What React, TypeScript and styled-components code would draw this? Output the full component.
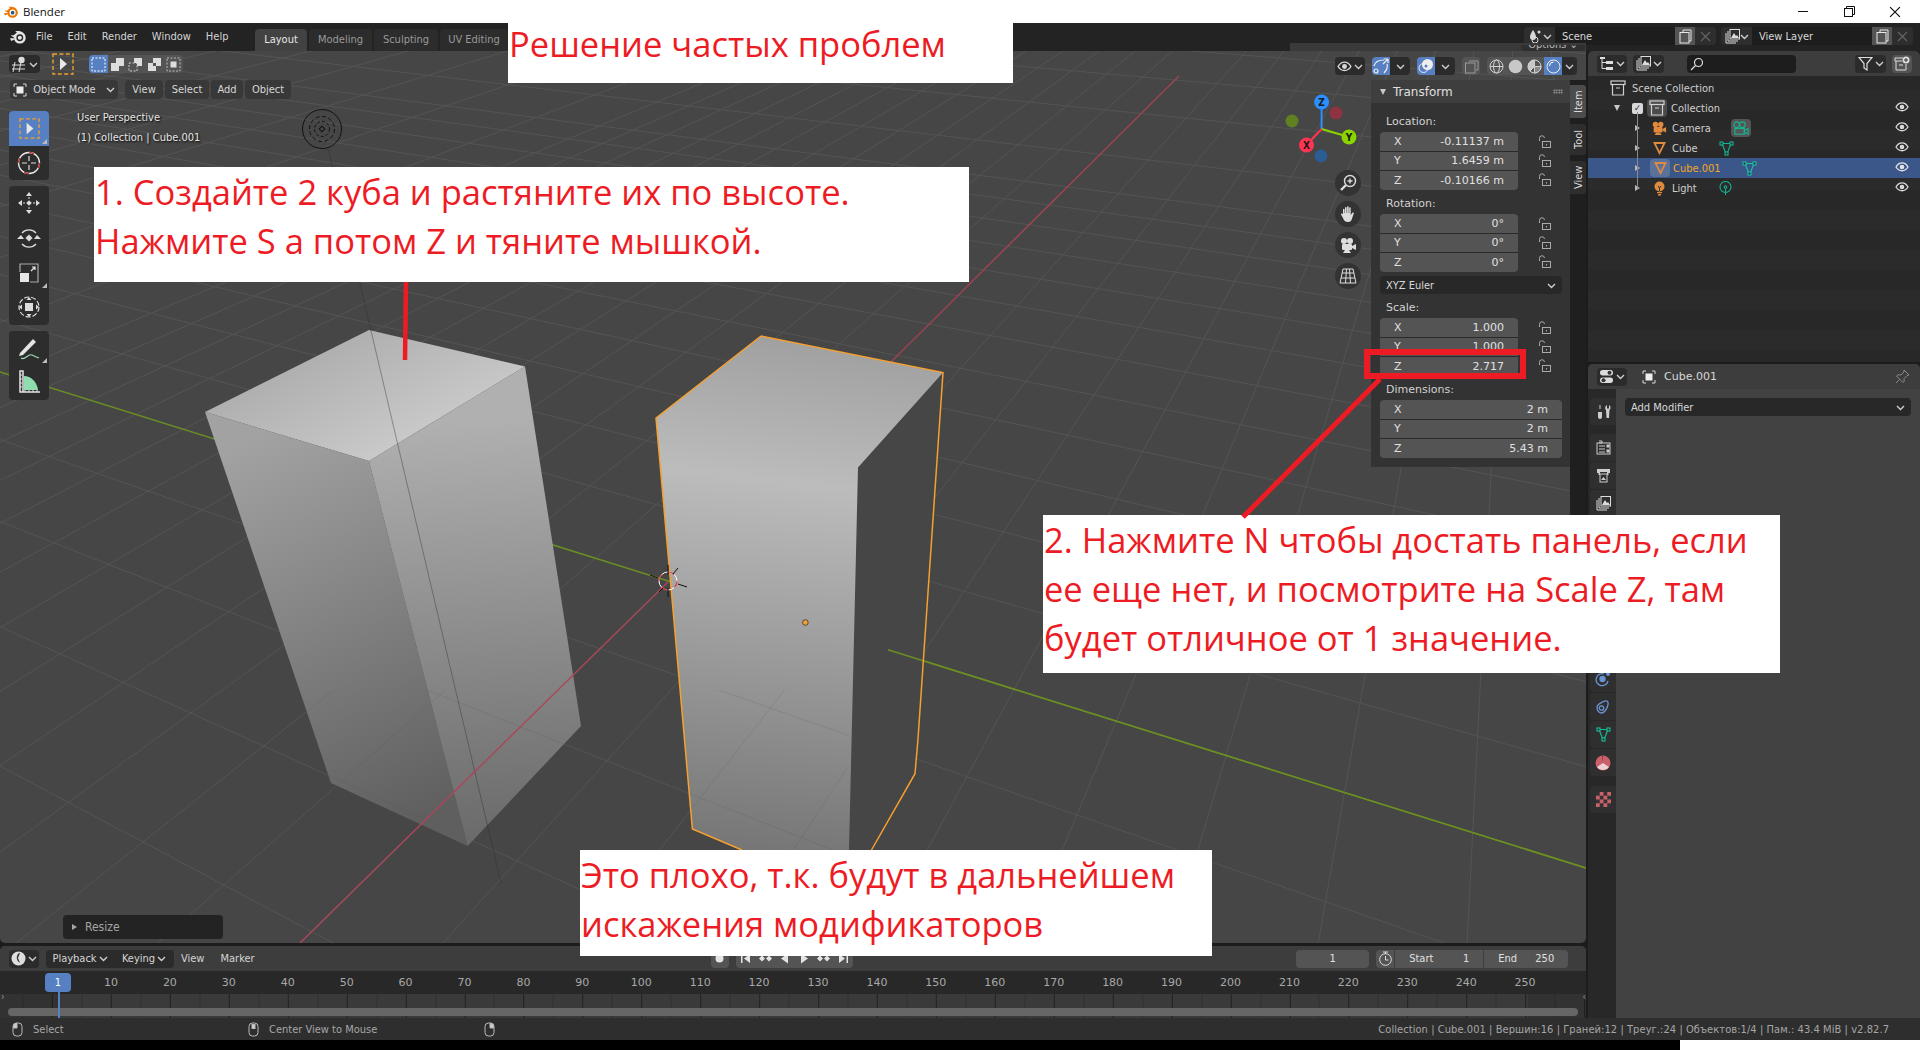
import styled, { createGlobalStyle } from "styled-components";

const Global = createGlobalStyle`
  html, body { margin: 0; padding: 0; background: #000; }
  * { box-sizing: border-box; }
`;

const Page = styled.div`
  position: relative;
  width: 1920px;
  height: 1050px;
  overflow: hidden;
  background: #1c1c1c;
  color: #d9d9d9;
  font-family: "DejaVu Sans", sans-serif;
  font-stretch: condensed;
  font-size: 11px;
  line-height: 1;
`;

const Svg = styled.svg<{ $s?: number }>`
  display: block;
  flex: none;
  width: ${p => p.$s || 16}px;
  height: ${p => p.$s || 16}px;
`;

/* ---------- title + top bar ---------- */
const TitleBar = styled.div`
  height: 23px;
  background: #fff;
  display: flex;
  align-items: center;
  padding: 0 2px 0 3px;
  color: #111;
  font: 11.5px "Open Sans", sans-serif;
`;
const TitleText = styled.span`
  margin-left: 4px;
  flex: 1;
`;
const WinBtn = styled.div`
  width: 46px;
  display: flex;
  justify-content: center;
`;
const TopBar = styled.div`
  height: 28px;
  background: #232323;
  display: flex;
  align-items: flex-start;
  padding-left: 9px;
`;
const Menu = styled.div`
  display: flex;
  gap: 15px;
  margin: 8px 0 0 9px;
  width: 219px;
  color: #d4d4d4;
`;
const Tab = styled.div<{ $active?: boolean; $w: number }>`
  width: ${p => p.$w}px;
  height: 22px;
  margin: 6px 2px 0 0;
  padding-bottom: 2px;
  border-radius: 4px 4px 0 0;
  display: flex;
  align-items: center;
  justify-content: center;
  background: ${p => (p.$active ? "#424242" : "#2c2c2c")};
  color: ${p => (p.$active ? "#e8e8e8" : "#999")};
`;
const TopRight = styled.div`
  margin-left: auto;
  display: flex;
  gap: 5px;
  padding: 4px 7px 0 0;
`;
const SceneGroup = styled.div`
  display: flex;
  height: 18px;
`;
const SceneIcon = styled.div`
  width: 31px;
  border-radius: 4px 0 0 4px;
  background: #2e2e2e;
  display: flex;
  align-items: center;
  justify-content: center;
`;
const SceneName = styled.div`
  width: 120px;
  background: #1d1d1d;
  display: flex;
  align-items: center;
  padding-left: 7px;
  color: #d8d8d8;
`;
const SceneBtn = styled.div<{ $dim?: boolean }>`
  width: ${p => (p.$dim ? 21 : 20)}px;
  display: flex;
  align-items: center;
  justify-content: center;
  background: ${p => (p.$dim ? "#2e2e2e" : "#545454")};
  border-radius: ${p => (p.$dim ? "0 4px 4px 0" : "0")};
`;

/* ---------- main layout ---------- */
const Workspace = styled.div`
  height: 967px;
  display: flex;
`;
const LeftCol = styled.div`
  width: 1586px;
  display: flex;
  flex-direction: column;
  gap: 3px;
`;
const RightCol = styled.div`
  width: 332px;
  margin-left: 2px;
  display: flex;
  flex-direction: column;
  gap: 2px;
`;

/* ---------- viewport ---------- */
const Viewport = styled.div`
  position: relative;
  height: 892px;
  background: #464646;
  border-radius: 0 0 5px 5px;
`;
const Canvas = styled.svg`
  position: absolute;
  inset: 0;
  width: 1586px;
  height: 892px;
`;
const HeaderStrip = styled.div`
  position: absolute;
  left: 1290px;
  top: -8px;
  width: 296px;
  height: 8px;
  background: #3a3a3a;
`;
const OptionsPill = styled.div`
  position: absolute;
  left: 1521px;
  top: -6px;
  width: 64px;
  height: 6px;
  overflow: hidden;
  background: #2f2f2f;
  border-radius: 0 0 4px 4px;
  color: #bbb;
  text-align: center;
  line-height: 0;
`;
const HeaderLayer = styled.div`
  position: relative;
  padding: 4px 9px 0;
`;
const HeadRow = styled.div`
  display: flex;
  align-items: flex-start;
`;
const ModeRow = styled.div`
  display: flex;
  margin-top: 5px;
  margin-left: 1px;
  gap: 2px;
`;
const Btn = styled.div<{ $w: number; $kind?: "dark" | "mid" | "blue"; $ml?: number }>`
  width: ${p => p.$w}px;
  height: 18px;
  margin-left: ${p => p.$ml || 0}px;
  flex: none;
  display: flex;
  align-items: center;
  justify-content: center;
  gap: 2px;
  white-space: nowrap;
  border-radius: 4px;
  color: #d6d6d6;
  background: ${p => (p.$kind === "blue" ? "#5680c2" : p.$kind === "mid" ? "#545454" : "#2b2b2b")};
`;
const Joined = styled.div<{ $ml?: number }>`
  display: flex;
  margin-left: ${p => p.$ml || 0}px;
  & > * { border-radius: 0; margin-left: 0; }
  & > *:first-child { border-radius: 4px 0 0 4px; }
  & > *:last-child { border-radius: 0 4px 4px 0; }
`;
const ViewTools = styled.div`
  margin-left: auto;
  margin-top: 2px;
  display: flex;
  gap: 7px;
`;
const ModeBtn = styled(Btn)`
  height: 19px;
  background: #383838;
`;
const ModeLabel = styled.span`
  margin: 0 8px 0 4px;
`;
const ToolColumn = styled.div`
  position: absolute;
  left: 9px;
  top: 60px;
  display: flex;
  flex-direction: column;
  gap: 6px;
`;
const ToolGroup = styled.div`
  width: 40px;
  border-radius: 4px;
  overflow: hidden;
  background: #2d2d2d;
`;
const Tool = styled.div<{ $active?: boolean; $corner?: boolean }>`
  position: relative;
  height: 34.6px;
  display: flex;
  align-items: center;
  justify-content: center;
  background: ${p => (p.$active ? "#5680c2" : "transparent")};
  &::after {
    content: "";
    display: ${p => (p.$corner ? "block" : "none")};
    position: absolute;
    right: 2px;
    bottom: 2px;
    border-left: 5px solid transparent;
    border-bottom: 5px solid #bbb;
  }
`;
const ViewInfo = styled.div`
  position: absolute;
  left: 77px;
  top: 57px;
  color: #e6e6e6;
  text-shadow: 1px 1px 2px #000;
  line-height: 20px;
`;
const ResizePanel = styled.div`
  position: absolute;
  left: 63px;
  bottom: 4px;
  width: 160px;
  height: 24px;
  border-radius: 4px;
  background: #232323;
  color: #a5a5a5;
  font-size: 12px;
  display: flex;
  align-items: center;
  padding-left: 9px;
  gap: 8px;
`;
const Tri = styled.span`
  border-left: 5px solid #a5a5a5;
  border-top: 3.5px solid transparent;
  border-bottom: 3.5px solid transparent;
`;
const NavButtons = styled.div`
  position: absolute;
  left: 1335px;
  top: 119px;
  display: flex;
  flex-direction: column;
  gap: 5px;
`;
const NavBtn = styled.div`
  width: 26px;
  height: 26px;
  border-radius: 50%;
  background: #333;
  display: flex;
  align-items: center;
  justify-content: center;
`;

/* ---------- N panel ---------- */
const NPanel = styled.div`
  position: absolute;
  left: 1371px;
  top: 29px;
  width: 199px;
  height: 387px;
  background: #333;
  font-stretch: normal;
`;
const NHead = styled.div`
  height: 23px;
  background: #3e3e3e;
  display: flex;
  align-items: center;
  padding: 0 7px 0 9px;
  gap: 7px;
  color: #e0e0e0;
  font-size: 12px;
`;
const DownTri = styled.span`
  border-top: 6px solid #c8c8c8;
  border-left: 3.5px solid transparent;
  border-right: 3.5px solid transparent;
`;
const Grip = styled.span`
  margin-left: auto;
  width: 10px;
  height: 5px;
  background-image: radial-gradient(#999 0.8px, transparent 0.9px);
  background-size: 2.5px 2.5px;
`;
const NBody = styled.div`
  padding: 9px 8px 0 9px;
`;
const FieldLabel = styled.div`
  height: 18px;
  margin-bottom: 2px;
  padding-left: 6px;
  display: flex;
  align-items: center;
  color: #d2d2d2;
`;
const Section = styled.div`
  margin-bottom: 4px;
`;
const FieldLine = styled.div`
  display: flex;
`;
const Stack = styled.div<{ $w: number }>`
  width: ${p => p.$w}px;
  height: 58px;
  flex: none;
  display: grid;
  grid-template-rows: repeat(3, 1fr);
  gap: 1px;
  background: #2a2a2a;
  border-radius: 4px;
  overflow: hidden;
`;
const Field = styled.div`
  background: #545454;
  display: flex;
  align-items: center;
  justify-content: space-between;
  padding: 0 14px;
  color: #e0e0e0;
`;
const LockCol = styled.div`
  width: 54px;
  height: 58px;
  flex: none;
  display: grid;
  grid-template-rows: repeat(3, 1fr);
  justify-items: center;
  align-items: center;
`;
const Dropdown = styled.div`
  height: 18px;
  margin-bottom: 4px;
  padding: 0 6px;
  border-radius: 4px;
  background: #282828;
  display: flex;
  align-items: center;
  justify-content: space-between;
  color: #d8d8d8;
  font-stretch: condensed;
`;
const SideTabs = styled.div`
  position: absolute;
  left: 1570px;
  top: 29px;
  width: 16px;
  height: 435px;
  background: #1f1f1f;
  padding-top: 5px;
  display: flex;
  flex-direction: column;
  gap: 6px;
`;
const SideTab = styled.div<{ $active?: boolean; $h: number }>`
  height: ${p => p.$h}px;
  border-radius: 3px 0 0 3px;
  background: ${p => (p.$active ? "#4c4c4c" : "#2e2e2e")};
  color: #dcdcdc;
  writing-mode: vertical-rl;
  transform: rotate(180deg);
  display: flex;
  align-items: center;
  justify-content: center;
`;

/* ---------- timeline ---------- */
const Timeline = styled.div`
  position: relative;
  height: 72px;
  border-radius: 5px 5px 0 0;
  overflow: hidden;
  background: #3a3a3a;
`;
const TimeHead = styled.div`
  height: 25px;
  background: #3d3d3d;
  display: flex;
  align-items: center;
  padding-left: 9px;
`;
const PlainMenu = styled.span<{ $ml: number }>`
  margin-left: ${p => p.$ml}px;
  color: #d4d4d4;
`;
const Spacer = styled.div<{ $w: number }>`
  width: ${p => p.$w}px;
  flex: none;
`;
const Ruler = styled.div`
  height: 23px;
  background: #282828;
  display: flex;
  align-items: center;
  padding-left: 81.5px;
  color: #a8a8a8;
  font-stretch: normal;
`;
const RulerNum = styled.div`
  width: 58.93px;
  flex: none;
  text-align: center;
`;
const FrameChip = styled.div`
  position: absolute;
  left: 45px;
  top: 27px;
  width: 26px;
  height: 19px;
  border-radius: 4px;
  background: #5680c2;
  color: #fff;
  display: flex;
  align-items: center;
  justify-content: center;
`;
const Tracks = styled.div`
  height: 24px;
  background:
    linear-gradient(to right, rgba(0,0,0,.14) 59px, transparent 59px, transparent 1528px, rgba(0,0,0,.14) 1528px),
    repeating-linear-gradient(to right, #262626 0, #262626 1px, transparent 1px, transparent 58.93px) 52px 0,
    repeating-linear-gradient(to right, #303030 0, #303030 1px, transparent 1px, transparent 29.465px) 22.5px 0,
    #3a3a3a;
`;
const PlayHead = styled.div`
  position: absolute;
  left: 58px;
  top: 46px;
  width: 2px;
  height: 26px;
  background: #5680c2;
`;
const Scrollbar = styled.div`
  position: absolute;
  left: 8px;
  top: 62px;
  width: 1570px;
  height: 8px;
  border-radius: 4px;
  background: #666;
`;
const EdgeArrow = styled.span<{ $right?: boolean }>`
  position: absolute;
  top: 46px;
  ${p => (p.$right ? "right: 0;" : "left: 1px;")}
  color: #999;
  font-size: 10px;
`;
const TimeField = styled.div<{ $w: number; $between?: boolean }>`
  width: ${p => p.$w}px;
  height: 18px;
  background: #545454;
  display: flex;
  align-items: center;
  justify-content: ${p => (p.$between ? "space-between" : "center")};
  padding: 0 ${p => (p.$between ? 14 : 0)}px;
  color: #e0e0e0;
  border-radius: 4px;
  flex: none;
`;
const Seg = styled.div`
  display: flex;
  gap: 1px;
  & > * { border-radius: 0; }
  & > *:first-child { border-radius: 4px 0 0 4px; }
  & > *:last-child { border-radius: 0 4px 4px 0; }
`;

/* ---------- status bar ---------- */
const StatusBar = styled.div`
  height: 22px;
  background: #2e2e2e;
  display: flex;
  align-items: center;
  padding: 0 31px 0 10px;
  color: #a6a6a6;
`;
const StatusItem = styled.div<{ $w: number }>`
  width: ${p => p.$w}px;
  flex: none;
  display: flex;
  align-items: center;
  gap: 8px;
`;
const StatusRight = styled.div`
  margin-left: auto;
  letter-spacing: 0.07px;
`;
const BottomStrip = styled.div`
  height: 10px;
  display: flex;
  background: #000;
`;
const WhiteCorner = styled.div`
  margin-left: auto;
  width: 240px;
  background: #fff;
`;

/* ---------- outliner ---------- */
const Outliner = styled.div`
  position: relative;
  height: 311px;
  background: repeating-linear-gradient(to bottom, #282828 0, #282828 20px, #2b2b2b 20px, #2b2b2b 40px) 0 19px;
  border-radius: 5px 5px 0 0;
  overflow: hidden;
`;
const PanelHead = styled.div`
  height: 25px;
  background: #3d3d3d;
  display: flex;
  align-items: center;
  padding: 0 7px 0 9px;
`;
const SearchBox = styled.div`
  width: 109px;
  height: 18px;
  margin-left: 23px;
  border-radius: 4px;
  background: #1d1d1d;
  display: flex;
  align-items: center;
  padding-left: 3px;
`;
const Rows = styled.div`
  padding-top: 2px;
`;
const Row = styled.div<{ $pad: number; $selected?: boolean }>`
  position: relative;
  height: 20px;
  display: flex;
  align-items: center;
  padding-left: ${p => p.$pad}px;
  background: ${p => (p.$selected ? "#3b5689" : "transparent")};
  color: ${p => (p.$selected ? "#f5a623" : "#cfcfcf")};
`;
const RowText = styled.span<{ $ml: number }>`
  margin-left: ${p => p.$ml}px;
`;
const SideIcon = styled.div<{ $box?: boolean }>`
  margin-left: ${p => (p.$box ? 20 : 22)}px;
  width: ${p => (p.$box ? 20 : 14)}px;
  height: 18px;
  border-radius: 4px;
  background: ${p => (p.$box ? "#555" : "transparent")};
  display: flex;
  align-items: center;
  justify-content: center;
`;
const IconBox = styled.div<{ $box?: boolean }>`
  width: 20px;
  height: 18px;
  border-radius: 4px;
  background: ${p => (p.$box ? "rgba(255,255,255,.16)" : "transparent")};
  display: flex;
  align-items: center;
  justify-content: center;
`;
const EyeWrap = styled.div`
  position: absolute;
  left: 307px;
  top: 2px;
`;
const TreeArrow = styled.span`
  width: 0;
  height: 0;
  border-left: 5px solid #b8b8b8;
  border-top: 3px solid transparent;
  border-bottom: 3px solid transparent;
`;
const Check = styled.div`
  width: 11px;
  height: 11px;
  border-radius: 2px;
  background: #d8d8d8;
  color: #222;
  font-size: 9px;
  display: flex;
  align-items: center;
  justify-content: center;
  margin: 0 4px 0 12px;
`;
const TreeLine = styled.div`
  position: absolute;
  left: 49px;
  top: 61px;
  width: 1px;
  height: 77px;
  background: #8a8a8a;
`;

/* ---------- properties ---------- */
const Properties = styled.div`
  height: 654px;
  border-radius: 5px 5px 0 0;
  overflow: hidden;
  background: #424242;
  display: flex;
  flex-direction: column;
`;
const PropBody = styled.div`
  flex: 1;
  display: flex;
`;
const PropNav = styled.div`
  width: 28px;
  background: #282828;
  padding: 9px 0 0 2px;
  display: flex;
  flex-direction: column;
`;
const NavTab = styled.div<{ $mt?: number }>`
  height: 27px;
  margin-top: ${p => p.$mt ?? 1}px;
  border-radius: 4px 0 0 4px;
  background: #2f2f2f;
  flex: none;
  display: flex;
  align-items: center;
  justify-content: center;
`;
const PropMain = styled.div`
  flex: 1;
  padding: 9px 9px 0;
`;
const HeadTitle = styled.span`
  margin-left: 8px;
  color: #d8d8d8;
  font-stretch: normal;
`;
const PinWrap = styled.div`
  margin-left: auto;
  margin-right: 3px;
`;
const LogoOffset = styled.div`
  margin-top: 5px;
`;
const ToolOffset = styled.div`
  margin: -2px 0 0 12px;
`;

/* ---------- annotations ---------- */
const Note = styled.div<{ $x: number; $y: number; $w: number; $h: number; $lh?: number }>`
  position: absolute;
  left: ${p => p.$x}px;
  top: ${p => p.$y}px;
  width: ${p => p.$w}px;
  height: ${p => p.$h}px;
  background: #fff;
  color: #ed1c24;
  font-family: "Open Sans", sans-serif;
  font-stretch: normal;
  font-size: 34.5px;
  line-height: ${p => p.$lh || 49}px;
  padding-left: 1px;
  white-space: pre;
`;
const RedBox = styled.div`
  position: absolute;
  left: 1364px;
  top: 349px;
  width: 162px;
  height: 30px;
  border: 6px solid #ed1c24;
`;
const RedLines = styled.svg`
  position: absolute;
  inset: 0;
  width: 1920px;
  height: 1050px;
  pointer-events: none;
`;

/* ---------- icons ---------- */
const Chev = ({ c = "#cfcfcf" }: { c?: string }) => (
  <Svg $s={9} viewBox="0 0 9 9"><path d="M1 3l3.5 3.5L8 3" fill="none" stroke={c} strokeWidth="1.4" /></Svg>
);
const LOGO_PATH = "M1 9.5l5.5-.2L1.800 6h3.400l3.600-3-2-1.600h3.400c3.800 0 8.300 2.600 8.300 7.600 0 3.600-3 6.300-6.600 6.300-3.400 0-5.700-2-6-4.400L2.600 12.500z";
const Logo = ({ s = 16, ring = "#ea7600", hole = "#fff", core = "#265787" }: { s?: number; ring?: string; hole?: string; core?: string }) => (
  <Svg $s={s} viewBox="0 0 20 16">
    <path d={LOGO_PATH} fill={ring} />
    <circle cx="12" cy="8.800" r="3.800" fill={hole} />
    <circle cx="12" cy="8.800" r="2.300" fill={core} />
  </Svg>
);
const SelectIcon = ({ s = 22 }: { s?: number }) => (
  <Svg $s={s} viewBox="0 0 22 22">
    <rect x="1" y="1" width="20" height="20" fill="none" stroke="#f0a030" strokeWidth="1.400" strokeDasharray="4 2.400" />
    <path d="M8 5v12l7-6z" fill="#e8e8e8" />
  </Svg>
);
const CursorIcon = () => (
  <Svg $s={24} viewBox="0 0 24 24" fill="none">
    <circle cx="12" cy="12" r="10.500" stroke="#e8e8e8" strokeWidth="1.300" />
    <circle cx="12" cy="12" r="10.500" stroke="#b33" strokeWidth="1.400" strokeDasharray="5 11.500" />
    <path d="M12 5v5M12 14v5M5 12h5M14 12h5" stroke="#ddd" strokeWidth="1.200" />
  </Svg>
);
const MoveIcon = () => (
  <Svg $s={24} viewBox="0 0 24 24" fill="#ddd">
    <path d="M12 1l3 4H9zM12 23l-3-4h6zM1 12l4-3v6zM23 12l-4 3V9z" />
    <rect x="10" y="10" width="4" height="4" transform="rotate(45 12 12)" />
    <path d="M12 6v2M12 16v2M6 12h2M16 12h2" stroke="#ddd" />
  </Svg>
);
const RotateIcon = () => (
  <Svg $s={24} viewBox="0 0 24 24" fill="#ddd">
    <path d="M5 7a9.500 9.500 0 0 1 14 0M19 18a9.500 9.500 0 0 1-14 0" fill="none" stroke="#ddd" strokeWidth="1.300" />
    <path d="M0 13l4-4 3 4zM24 13l-4-4-3 4z" />
    <rect x="9.500" y="9.500" width="5" height="5" transform="rotate(45 12 12)" />
  </Svg>
);
const ScaleIcon = () => (
  <Svg $s={20} viewBox="0 0 20 20" fill="none">
    <path d="M1 9V1h18v18h-8" stroke="#aaa" strokeWidth="1.200" />
    <rect x="1" y="10" width="9" height="9" fill="#e6e6e6" />
    <path d="M12 8l4-4M13 4h3v3" stroke="#e6e6e6" strokeWidth="1.200" />
  </Svg>
);
const TransformIcon = () => (
  <Svg $s={24} viewBox="0 0 24 24" fill="#ddd">
    <circle cx="12" cy="12" r="10" fill="none" stroke="#ddd" strokeWidth="1.200" strokeDasharray="5 2" />
    <rect x="8" y="8" width="8" height="8" />
    <path d="M12 2l2.500 3h-5zM12 22l-2.500-3h5zM2 12l3-2.500v5zM22 12l-3 2.500v-5z" />
  </Svg>
);
const AnnotateIcon = () => (
  <Svg $s={28} viewBox="0 0 28 28" fill="none">
    <path d="M5 19L18 5l3 3L8 21l-4 1z" fill="#e4e4e4" />
    <path d="M6 24c4 3 7-5 11-3 2 1 4 2 7 3" stroke="#9fdcb5" strokeWidth="1.200" />
  </Svg>
);
const MeasureIcon = () => (
  <Svg $s={24} viewBox="0 0 24 24" fill="none">
    <path d="M7 6c7 0 13 6 14 14H7z" fill="#8fdcae" />
    <path d="M3 1h3v21H3zM3 22h20" stroke="#e4e4e4" strokeWidth="1.500" />
    <path d="M3 5h2M3 9h2M3 13h2M3 17h2M8 20v2M12 20v2M16 20v2M20 20v2" stroke="#e4e4e4" />
  </Svg>
);
const Eye = ({ c = "#d8d8d8", s = 14 }: { c?: string; s?: number }) => (
  <Svg $s={s} viewBox="0 0 14 14" fill="none">
    <path d="M1 7c3-5.500 9-5.500 12 0-3 5-9 5-12 0z" stroke={c} strokeWidth="1.300" />
    <circle cx="7" cy="7" r="2.300" fill={c} />
  </Svg>
);
const Lock = () => (
  <Svg $s={14} viewBox="0 0 14 14" fill="none" stroke="#aaa">
    <path d="M1.500 6V3.500a2.500 2.500 0 0 1 5-.5" />
    <rect x="4.500" y="6.500" width="8" height="6" />
    <path d="M8.500 9v1.500" />
  </Svg>
);
const CopyIcon = () => (
  <Svg $s={15} viewBox="0 0 15 15" fill="none" stroke="#e8e8e8">
    <path d="M5 3V1h8v11h-2" />
    <rect x="2" y="3.500" width="9" height="10.500" />
  </Svg>
);
const XIcon = ({ c = "#666", s = 11 }: { c?: string; s?: number }) => (
  <Svg $s={s} viewBox="0 0 11 11"><path d="M1 1l9 9M10 1l-9 9" stroke={c} strokeWidth="1.100" /></Svg>
);
const LayerIcon = () => (
  <Svg $s={15} viewBox="0 0 15 15" fill="none" stroke="#ddd">
    <path d="M1 4v10h10M3 2v10h10" />
    <rect x="5" y="0.500" width="9.500" height="9.500" />
    <path d="M6 9l3-5 2 3 1-1 2 3z" fill="#ddd" stroke="none" />
  </Svg>
);
const SceneIc = () => (
  <Svg $s={15} viewBox="0 0 15 15" fill="#d8d8d8">
    <path d="M5 1c2 3 3 5 3 7a3 3 0 0 1-6 0c0-2 1-4 3-7z" />
    <circle cx="11" cy="3" r="1.500" />
    <circle cx="7" cy="11" r="3" fill="none" stroke="#d8d8d8" />
  </Svg>
);
const ModeIcon = ({ s = 14 }: { s?: number }) => (
  <Svg $s={s} viewBox="0 0 14 14" fill="none">
    <path d="M1 4V1h3M10 1h3v3M1 10v3h3M13 10v3h-3" stroke="#d8d8d8" />
    <rect x="3.500" y="3.500" width="7" height="7" fill="#eee" />
  </Svg>
);
const ViewportEd = () => (
  <Svg $s={16} viewBox="0 0 16 16" fill="none" stroke="#ddd">
    <path d="M1 9h13M1 13h13M4 6l-2 10M10 6l-2 10" />
    <circle cx="10.500" cy="4" r="3.200" fill="#ddd" stroke="none" />
  </Svg>
);
const SelMode = ({ i }: { i: number }) => (
  <Svg $s={15} viewBox="0 0 15 15" fill="none">
    {i === 0 && <rect x="1" y="1" width="13" height="13" stroke="#fff" strokeDasharray="2 1.500" />}
    {i === 1 && <path d="M6 1h8v8H9v5H1V6h5z" fill="#ddd" />}
    {i === 2 && <g><rect x="1" y="6" width="8" height="8" stroke="#ccc" strokeDasharray="2 1.500" /><path d="M6 1h8v8H9V6H6z" fill="#ddd" /></g>}
    {i === 3 && <path fillRule="evenodd" d="M1 6h5V1h8v8H9v5H1zM6 6v3h3V6z" fill="#ddd" />}
    {i === 4 && <g><rect x="1" y="1" width="13" height="13" stroke="#bbb" strokeDasharray="2 1.500" /><rect x="4.500" y="4.500" width="6" height="6" fill="#ddd" /></g>}
  </Svg>
);
const GizmoIc = () => (
  <Svg $s={16} viewBox="0 0 16 16" fill="none" stroke="#eee" strokeWidth="1.200">
    <circle cx="3" cy="13" r="2" />
    <path d="M1 8C2 4 6 2 11 2M15 1l-5 5M15 1h-4M15 1v4M14 6c1 3 0 6-3 9" />
  </Svg>
);
const OverlayIc = () => (
  <Svg $s={16} viewBox="0 0 16 16">
    <circle cx="5.500" cy="10" r="4.500" fill="none" stroke="#eee" />
    <circle cx="9.500" cy="6.500" r="5.500" fill="#eee" />
    <circle cx="8" cy="8" r="1.500" fill="#5680c2" />
  </Svg>
);
const XrayIc = () => (
  <Svg $s={15} viewBox="0 0 15 15" fill="none" stroke="#9a9a9a">
    <path d="M5 2h9v9h-2" />
    <rect x="1.500" y="4" width="9.500" height="10" />
  </Svg>
);
const ShadeIc = ({ i }: { i: number }) => (
  <Svg $s={15} viewBox="0 0 15 15" fill="none" stroke="#d0d0d0">
    {i === 0 && <g><circle cx="7.500" cy="7.500" r="6.500" /><ellipse cx="7.500" cy="7.500" rx="3" ry="6.500" /><path d="M1 7.500h13" /></g>}
    {i === 1 && <circle cx="7.500" cy="7.500" r="6.800" fill="#c8c8c8" stroke="none" />}
    {i === 2 && <g><circle cx="7.500" cy="7.500" r="6.500" /><path d="M7.500 1a6.500 6.500 0 0 0-4.500 11l4.500-4.500z" fill="#c8c8c8" /><path d="M7.500 7.500h6.500a6.500 6.500 0 0 1-6.500 6.500z" fill="#888" /></g>}
    {i === 3 && <g><circle cx="7.500" cy="7.500" r="6.500" stroke="#eee" /><path d="M3.500 7a4 4 0 0 1 4-4" stroke="#fff" /></g>}
  </Svg>
);
const Zoomy = () => (
  <Svg $s={18} viewBox="0 0 18 18" fill="none" stroke="#ddd" strokeWidth="1.400">
    <circle cx="11" cy="7" r="5.500" />
    <path d="M7 11l-5 5" strokeWidth="2.400" />
    <path d="M11 4.500v5M8.500 7h5" />
  </Svg>
);
const Hand = () => (
  <Svg $s={18} viewBox="0 0 18 18" fill="#ddd">
    <path d="M4 9V4.500c0-1 1.500-1 1.500 0V8h.5V2.800c0-1 1.600-1 1.600 0V8h.5V2c0-1 1.600-1 1.600 0v6h.5V3c0-1 1.500-1 1.500 0v7l1.500-2c.8-1 2-.2 1.500.7L12.500 15c-.8 1.500-2 2-3.500 2-3 0-4-1.500-5-4L2 9.500c-.5-1 .9-1.600 1.500-.6z" />
  </Svg>
);
const CamIc = ({ c = "#ddd", s = 18 }: { c?: string; s?: number }) => (
  <Svg $s={s} viewBox="0 0 18 18" fill={c}>
    <circle cx="5" cy="5" r="3" />
    <circle cx="11" cy="5" r="3" />
    <rect x="3" y="8" width="10" height="6" rx="1" />
    <path d="M13 10l4-2v6l-4-2zM6 14l-2 3h8l-2-3z" />
  </Svg>
);
const GridIc = () => (
  <Svg $s={18} viewBox="0 0 18 18" fill="none" stroke="#ddd">
    <path d="M4 2h10l3 14H1zM3 6h12M2 11h14M7.500 2L6.500 16M10.500 2l1 14" />
  </Svg>
);
const CollectionIc = ({ c = "#d0d0d0" }: { c?: string }) => (
  <Svg $s={16} viewBox="0 0 16 16" fill="none" stroke={c} strokeWidth="1.200">
    <rect x="1" y="1" width="14" height="3.500" />
    <path d="M2.500 4.500V15h11V4.500M6 8h4" />
  </Svg>
);
const OrangeTri = () => (
  <Svg $s={15} viewBox="0 0 15 15"><path fillRule="evenodd" d="M1 1h13L7.500 14zM4 3l3.500 7L11 3z" fill="#e08a3e" /></Svg>
);
const GreenTri = ({ c = "#16b392", s = 15 }: { c?: string; s?: number }) => (
  <Svg $s={s} viewBox="0 0 15 15" fill="none" stroke={c} strokeWidth="1.100">
    <path d="M3 2.500h9l-3.500 9h-2z" />
    <rect x="1" y="1" width="3" height="3" fill="#282828" />
    <rect x="11" y="1" width="3" height="3" fill="#282828" />
    <rect x="6" y="11" width="3" height="3" fill="#282828" />
  </Svg>
);
const Bulb = () => (
  <Svg $s={15} viewBox="0 0 15 15" fill="#e08a3e">
    <circle cx="7.500" cy="5.500" r="5" />
    <path d="M5 11h5v1.300H5zM6 13h3v1.500H6z" />
    <path d="M6 5l1.500 2L9 5M7.500 7v3" stroke="#333" fill="none" />
  </Svg>
);
const LightData = () => (
  <Svg $s={15} viewBox="0 0 15 15" fill="none" stroke="#16b392" strokeWidth="1.100">
    <circle cx="7.500" cy="6" r="5.500" />
    <circle cx="7.500" cy="6" r="1.300" />
    <path d="M7.500 8v6" />
  </Svg>
);
const CamData = () => (
  <Svg $s={17} viewBox="0 0 18 18" fill="none" stroke="#16b392" strokeWidth="1.200">
    <circle cx="5" cy="5" r="3" />
    <circle cx="11" cy="5" r="3" />
    <rect x="3" y="9" width="10" height="6" />
    <path d="M13 11l4-2v6l-4-2z" />
  </Svg>
);
const OutlinerIc = () => (
  <Svg $s={15} viewBox="0 0 15 15" fill="#ddd">
    <rect x="1" y="1" width="5" height="2" />
    <rect x="7" y="5" width="7" height="3" />
    <rect x="7" y="11" width="7" height="3" />
    <path d="M3 3v9.500h4M3 6.500h4" fill="none" stroke="#ddd" />
  </Svg>
);
const SearchIc = () => (
  <Svg $s={14} viewBox="0 0 14 14" fill="none" stroke="#ddd" strokeWidth="1.200">
    <circle cx="8.500" cy="5.500" r="4" />
    <path d="M5.500 8.500L1 13" />
  </Svg>
);
const FilterIc = () => (
  <Svg $s={15} viewBox="0 0 15 15" fill="none" stroke="#ddd" strokeWidth="1.200"><path d="M1 1.500h13L9 7.500V14l-3-2V7.500z" /></Svg>
);
const NewColl = () => (
  <Svg $s={16} viewBox="0 0 16 16" fill="none" stroke="#ddd">
    <path d="M9 2H1v3h7M2 5v9h10V8M5 9h4" />
    <circle cx="12" cy="4" r="3.500" fill="#ddd" stroke="none" />
    <path d="M12 2v4M10 4h4" stroke="#333" />
  </Svg>
);
const PropsIc = () => (
  <Svg $s={15} viewBox="0 0 15 15" fill="#ddd">
    <rect x="1" y="1" width="13" height="5.500" rx="2.700" />
    <rect x="1" y="8.500" width="13" height="5.500" rx="2.700" />
    <circle cx="10.500" cy="3.700" r="2" fill="#333" />
    <circle cx="4.500" cy="11.200" r="2" fill="#333" />
  </Svg>
);
const Pin = () => (
  <Svg $s={15} viewBox="0 0 15 15" fill="none" stroke="#8a8a8a">
    <path d="M9 1l5 5-2 .5-3 3 .2 3L8 13.500 1.500 7 3 5.800l3 .2 3-3zM4.500 10.500L1 14" />
  </Svg>
);
const ToolIc = () => (
  <Svg $s={15} viewBox="0 0 15 15" fill="#ccc">
    <path d="M11 1v3l1 1 1-1V1c2 1 2 4 .5 5L13 14h-2.500L10 6C8.500 5 9 2 11 1z" />
    <path d="M3.500 1v4h1V1zM2 8h4v5a2 2 0 0 1-4 0z" />
  </Svg>
);
const RenderIc = () => (
  <Svg $s={15} viewBox="0 0 15 15" fill="none" stroke="#ccc">
    <rect x="1" y="3" width="13" height="11" />
    <path d="M3 1h3v2H3M3 6h6M3 9h6M3 12h6" />
    <rect x="11" y="5" width="2" height="2" fill="#ccc" />
    <rect x="11" y="10" width="2" height="2" fill="#ccc" />
  </Svg>
);
const OutputIc = () => (
  <Svg $s={15} viewBox="0 0 15 15" fill="#ccc">
    <path d="M1 1h13v4h-1.500v2H11V4H4v3H2.500V5H1z" />
    <rect x="4" y="6" width="7" height="8" fill="none" stroke="#ccc" />
    <path d="M5 12l2.500-3L10 12z" />
  </Svg>
);
const ObjConstr = () => (
  <Svg $s={16} viewBox="0 0 16 16" fill="none" stroke="#6a94d4" strokeWidth="1.300">
    <path d="M2 8c0-2 7-7 10-6 3 2-1 11-5 12-3 0-5-2-5-6z" />
    <circle cx="6.500" cy="9" r="2.200" />
  </Svg>
);
const ObjIc = () => (
  <Svg $s={16} viewBox="0 0 16 16" fill="none" stroke="#6a94d4" strokeWidth="1.300">
    <path d="M13 10a6 6 0 1 1-4-7" />
    <circle cx="7.500" cy="8" r="2.500" fill="#6a94d4" />
    <circle cx="13" cy="3" r="1.300" fill="#6a94d4" />
  </Svg>
);
const MaterialIc = () => (
  <Svg $s={16} viewBox="0 0 16 16">
    <circle cx="8" cy="8" r="7.500" fill="#c9606a" />
    <path d="M8 8L2 12a7.500 7.500 0 0 0 12 0z" fill="#f0d0d4" />
    <path d="M8 8V1h-.5z" fill="#222" />
  </Svg>
);
const CheckerIc = () => (
  <Svg $s={15} viewBox="0 0 15 15">
    <rect width="15" height="15" fill="#c9606a" />
    <path d="M0 0h3.750v3.750H0zM7.500 0h3.750v3.750H7.500zM3.750 3.750H7.500V7.500H3.750zM11.250 3.750H15V7.500h-3.750zM0 7.500h3.750v3.750H0zM7.500 7.500h3.750v3.750H7.500zM3.750 11.250H7.500V15H3.750zM11.250 11.250H15V15h-3.750z" fill="#333" />
  </Svg>
);
const Clock = () => (
  <Svg $s={15} viewBox="0 0 15 15" fill="none" stroke="#ddd">
    <circle cx="7.500" cy="8.500" r="5.800" />
    <path d="M5 1h5M7.500 1v2M7.500 5v4h3" />
  </Svg>
);
const Mouse = ({ fill }: { fill: number }) => (
  <Svg $s={15} viewBox="0 0 11 15" fill="none" stroke="#bbb">
    <rect x="1" y="1" width="9" height="13" rx="3.500" />
    {fill === 0 && <path d="M1.500 6V3.500Q1.500 1.500 5 1.300V6z" fill="#ccc" />}
    {fill === 1 && <rect x="4" y="2.500" width="3" height="4" fill="#ccc" />}
    {fill === 2 && <path d="M9.500 6V3.500Q9.500 1.500 6 1.300V6z" fill="#ccc" />}
  </Svg>
);
const Transport = ({ d }: { d: string }) => (
  <Svg $s={13} viewBox="0 0 13 13"><path d={d} fill="#e4e4e4" /></Svg>
);

/* ---------- 3d scene ---------- */
const project = (u: number, v: number) => {
  const d = 1 - 0.0732 * u - 0.0308 * v;
  return [668 + (-63 * u + 75.8 * v) / d, 582 + (61.8 * u + 23.65 * v) / d];
};
const steps = (max: number) => {
  const out: number[] = [];
  for (let n = 1; n <= 12; n++) out.push(-n);
  for (let n = 14; n <= 40; n += 3) out.push(-n);
  for (let n = 1; n <= max; n++) out.push(n);
  return out;
};
const gridLines = () => {
  const lines: number[][] = [];
  steps(12).forEach(u => {
    const end = (1 - 0.0732 * u - 0.03) / 0.0308;
    const a = project(u, -60);
    const b = project(u, end);
    lines.push([a[0], a[1], b[0], b[1]]);
  });
  steps(31).forEach(v => {
    const end = (1 - 0.0308 * v - 0.03) / 0.0732;
    const a = project(-60, v);
    const b = project(end, v);
    lines.push([a[0], a[1], b[0], b[1]]);
  });
  return lines;
};
const GRID = gridLines();

const Grid = () => (
  <g stroke="#545454" strokeWidth="1">
    {GRID.map((l, i) => <line key={i} x1={l[0]} y1={l[1]} x2={l[2]} y2={l[3]} />)}
  </g>
);

const Scene = () => (
  <Canvas viewBox="0 51 1586 892">
    <defs>
      <linearGradient id="topL" gradientUnits="userSpaceOnUse" x1="330" y1="340" x2="390" y2="460">
        <stop offset="0" stopColor="#aeaeae" />
        <stop offset="1" stopColor="#cbcbcb" />
      </linearGradient>
      <linearGradient id="leftL" gradientUnits="userSpaceOnUse" x1="250" y1="440" x2="420" y2="820">
        <stop offset="0" stopColor="#a2a2a2" />
        <stop offset="1" stopColor="#5f5f5f" />
      </linearGradient>
      <linearGradient id="rightL" gradientUnits="userSpaceOnUse" x1="480" y1="420" x2="500" y2="830">
        <stop offset="0" stopColor="#b0b0b0" />
        <stop offset="1" stopColor="#6c6c6c" />
      </linearGradient>
      <linearGradient id="faceR" gradientUnits="userSpaceOnUse" x1="810" y1="340" x2="750" y2="850">
        <stop offset="0" stopColor="#a0a0a0" />
        <stop offset="0.28" stopColor="#bcbcbc" />
        <stop offset="1" stopColor="#767676" />
      </linearGradient>
      <clipPath id="lowClip"><rect x="300" y="690" width="549" height="260" /></clipPath>
    </defs>
    <Grid />
    <line x1="0" y1="372" x2="1586" y2="868" stroke="#6b8e23" strokeWidth="1.500" />
    <line x1="891" y1="362" x2="1179" y2="76" stroke="#9a4450" strokeWidth="1.500" />
    <polygon points="369,330 525,366.500 369,461 205,412" fill="url(#topL)" />
    <polygon points="205,412 369,461 467.600,846 331,783" fill="url(#leftL)" />
    <polygon points="369,461 525,366.500 581,726 467.600,846" fill="url(#rightL)" />
    <polygon points="943,372.600 858,467.500 849,850 871.500,850 915,773.700 918,739" fill="#464646" />
    <polygon points="761,336 943,372.600 858,467.500 849,850 742,850 692.400,829 656,418" fill="url(#faceR)" />
    <line x1="888" y1="649.800" x2="1586" y2="868" stroke="#6b8e23" strokeWidth="1.500" />
    <g clipPath="url(#lowClip)" opacity=".18"><Grid /></g>
    <line x1="328" y1="148" x2="501" y2="883" stroke="#333" strokeWidth=".6" opacity=".7" />
    <line x1="300" y1="943" x2="668" y2="582" stroke="#a8485a" strokeWidth="1.500" />
    <polyline points="761,336 943,372.600 918,739 915,773.700 871.500,850" fill="none" stroke="#f5a030" strokeWidth="1.500" />
    <polyline points="761,336 656,418 692.400,829 742,850" fill="none" stroke="#f5a030" strokeWidth="1.500" />
    <circle cx="805.400" cy="622.500" r="2.800" fill="#f5a030" stroke="#222" strokeWidth=".7" />
    <circle cx="668" cy="581" r="9" fill="none" stroke="#fff" strokeWidth="1" />
    <circle cx="668" cy="581" r="9" fill="none" stroke="#d33" strokeWidth="1.100" strokeDasharray="7 7" />
    <path d="M668 565v9M668 588v9M650 575l8 3M678 584l9 3M659 592l4-4M673 574l5-6" stroke="#111" strokeWidth="1" />
    <circle cx="322" cy="129" r="19.500" fill="none" stroke="#111" />
    <circle cx="322" cy="129" r="12.500" fill="none" stroke="#111" strokeDasharray="4 2.500" />
    <circle cx="322" cy="129" r="7.500" fill="none" stroke="#111" strokeDasharray="3 2" />
    <rect x="320" y="127" width="4" height="4" fill="none" stroke="#111" transform="rotate(45 322 129)" />
    <line x1="1321.600" y1="129" x2="1321.600" y2="102" stroke="#2a8fff" strokeWidth="2" />
    <line x1="1321.600" y1="129" x2="1349" y2="137" stroke="#8ad400" strokeWidth="2" />
    <line x1="1321.600" y1="129" x2="1306.500" y2="145" stroke="#ff3352" strokeWidth="2" />
    <circle cx="1336" cy="113" r="6.500" fill="#8e3341" />
    <circle cx="1292" cy="121" r="6.500" fill="#5f8122" />
    <circle cx="1321" cy="156" r="6.500" fill="#2b5c92" />
    <circle cx="1321.600" cy="102" r="7.500" fill="#2a8fff" />
    <circle cx="1349" cy="137" r="7.500" fill="#8ad400" />
    <circle cx="1306.500" cy="145" r="7.500" fill="#ff3352" />
    <g fontFamily="DejaVu Sans" fontSize="10" fontWeight="700" fill="#1a1a1a" textAnchor="middle">
      <text x="1321.600" y="105.500">Z</text>
      <text x="1349" y="140.500">Y</text>
      <text x="1306.500" y="148.500">X</text>
    </g>
  </Canvas>
);

const Fields = ({ rows, w = 138 }: { rows: string[][]; w?: number }) => (
  <Stack $w={w}>
    {rows.map(r => <Field key={r[0]}><span>{r[0]}</span><span>{r[1]}</span></Field>)}
  </Stack>
);
const Locks = () => <LockCol><Lock /><Lock /><Lock /></LockCol>;

const xyz = (a: string, b: string, c: string) => [["X", a], ["Y", b], ["Z", c]];

const NUMS = Array.from({ length: 25 }, (_, i) => (i + 1) * 10);
const SEL = [0, 1, 2, 3, 4];
const TRANSPORT = [
  "M2 2h1.500v9H2zM11 2v9L5 6.500z",
  "M0 6.500l3-3 3 3-3 3zM7 6.500l3-3 3 3-3 3z",
  "M10 1.500v10L3 6.500z",
  "M3 1.500v10l7-5z",
  "M0 6.500l3-3 3 3-3 3zM7 6.500l3-3 3 3-3 3z",
  "M2 2v9l6-4.500zM9.500 2H11v9H9.500z",
];

export default function App() {
  return (
    <Page>
      <Global />
      <TitleBar>
        <Logo s={16} />
        <TitleText>Blender</TitleText>
        <WinBtn><Svg $s={11} viewBox="0 0 11 11"><path d="M0 5.500h10" stroke="#111" /></Svg></WinBtn>
        <WinBtn>
          <Svg $s={11} viewBox="0 0 11 11" fill="none" stroke="#111"><rect x=".5" y="2.500" width="8" height="8" /><path d="M2.500 2.500v-2h8v8h-2" /></Svg>
        </WinBtn>
        <WinBtn><XIcon c="#111" s={12} /></WinBtn>
      </TitleBar>

      <TopBar>
        <LogoOffset><Logo s={18} ring="#e6e6e6" hole="#232323" core="#e6e6e6" /></LogoOffset>
        <Menu>
          <span>File</span><span>Edit</span><span>Render</span><span>Window</span><span>Help</span>
        </Menu>
        <Tab $active $w={52}>Layout</Tab>
        <Tab $w={63}>Modeling</Tab>
        <Tab $w={64}>Sculpting</Tab>
        <Tab $w={68}>UV Editing</Tab>
        <TopRight>
          <SceneGroup>
            <SceneIcon><SceneIc /><Chev /></SceneIcon>
            <SceneName>Scene</SceneName>
            <SceneBtn><CopyIcon /></SceneBtn>
            <SceneBtn $dim><XIcon /></SceneBtn>
          </SceneGroup>
          <SceneGroup>
            <SceneIcon><LayerIcon /><Chev /></SceneIcon>
            <SceneName>View Layer</SceneName>
            <SceneBtn><CopyIcon /></SceneBtn>
            <SceneBtn $dim><XIcon /></SceneBtn>
          </SceneGroup>
        </TopRight>
      </TopBar>

      <Workspace>
        <LeftCol>
          <Viewport>
            <Scene />
            <HeaderStrip />
            <OptionsPill>Options ⌄</OptionsPill>
            <HeaderLayer>
              <HeadRow>
                <Btn $w={31}><ViewportEd /><Chev /></Btn>
                <ToolOffset><SelectIcon /></ToolOffset>
                <Joined $ml={15}>
                  {SEL.map(i => <Btn key={i} $w={18.8} $kind={i === 0 ? "blue" : "mid"}><SelMode i={i} /></Btn>)}
                </Joined>
                <ViewTools>
                  <Btn $w={30}><Eye s={15} /><Chev /></Btn>
                  <Joined>
                    <Btn $w={18} $kind="blue"><GizmoIc /></Btn>
                    <Btn $w={20}><Chev /></Btn>
                  </Joined>
                  <Joined>
                    <Btn $w={18} $kind="blue"><OverlayIc /></Btn>
                    <Btn $w={20}><Chev /></Btn>
                  </Joined>
                  <Btn $w={18} $kind="mid"><XrayIc /></Btn>
                  <Joined>
                    {[0, 1, 2].map(i => <Btn key={i} $w={19} $kind="mid"><ShadeIc i={i} /></Btn>)}
                    <Btn $w={18} $kind="blue"><ShadeIc i={3} /></Btn>
                    <Btn $w={15}><Chev /></Btn>
                  </Joined>
                </ViewTools>
              </HeadRow>
              <ModeRow>
                <ModeBtn $w={108}><ModeIcon /><ModeLabel>Object Mode</ModeLabel><Chev /></ModeBtn>
                <ModeBtn $w={38} $ml={5}>View</ModeBtn>
                <ModeBtn $w={44}>Select</ModeBtn>
                <ModeBtn $w={32}>Add</ModeBtn>
                <ModeBtn $w={46}>Object</ModeBtn>
              </ModeRow>
            </HeaderLayer>
            <ToolColumn>
              <ToolGroup>
                <Tool $active $corner><SelectIcon s={21} /></Tool>
                <Tool><CursorIcon /></Tool>
              </ToolGroup>
              <ToolGroup>
                <Tool><MoveIcon /></Tool>
                <Tool><RotateIcon /></Tool>
                <Tool $corner><ScaleIcon /></Tool>
                <Tool><TransformIcon /></Tool>
              </ToolGroup>
              <ToolGroup>
                <Tool $corner><AnnotateIcon /></Tool>
                <Tool><MeasureIcon /></Tool>
              </ToolGroup>
            </ToolColumn>
            <ViewInfo>User Perspective<br />(1) Collection | Cube.001</ViewInfo>
            <NavButtons>
              <NavBtn><Zoomy /></NavBtn>
              <NavBtn><Hand /></NavBtn>
              <NavBtn><CamIc /></NavBtn>
              <NavBtn><GridIc /></NavBtn>
            </NavButtons>
            <NPanel>
              <NHead><DownTri />Transform<Grip /></NHead>
              <NBody>
                <Section>
                  <FieldLabel>Location:</FieldLabel>
                  <FieldLine><Fields rows={xyz("-0.11137 m", "1.6459 m", "-0.10166 m")} /><Locks /></FieldLine>
                </Section>
                <Section>
                  <FieldLabel>Rotation:</FieldLabel>
                  <FieldLine><Fields rows={xyz("0°", "0°", "0°")} /><Locks /></FieldLine>
                </Section>
                <Dropdown>XYZ Euler<Chev /></Dropdown>
                <Section>
                  <FieldLabel>Scale:</FieldLabel>
                  <FieldLine><Fields rows={xyz("1.000", "1.000", "2.717")} /><Locks /></FieldLine>
                </Section>
                <Section>
                  <FieldLabel>Dimensions:</FieldLabel>
                  <Fields w={182} rows={xyz("2 m", "2 m", "5.43 m")} />
                </Section>
              </NBody>
            </NPanel>
            <SideTabs>
              <SideTab $active $h={33}>Item</SideTab>
              <SideTab $h={31}>Tool</SideTab>
              <SideTab $h={33}>View</SideTab>
            </SideTabs>
            <ResizePanel><Tri />Resize</ResizePanel>
          </Viewport>

          <Timeline>
            <TimeHead>
              <Btn $w={30}><Svg $s={15} viewBox="0 0 15 15"><circle cx="7.500" cy="7.500" r="7" fill="#ddd" /><path d="M9 2l-2 5 2 5a6 6 0 0 1-1-10z" fill="#333" /></Svg><Chev /></Btn>
              <Joined $ml={7}>
                <Btn $w={68}>Playback<Chev /></Btn>
                <Btn $w={60}>Keying<Chev /></Btn>
              </Joined>
              <PlainMenu $ml={7}>View</PlainMenu>
              <PlainMenu $ml={16}>Marker</PlainMenu>
              <Spacer $w={456} />
              <Btn $w={18} $kind="mid"><Svg $s={9} viewBox="0 0 9 9"><circle cx="4.500" cy="4.500" r="4" fill="#e4e4e4" /></Svg></Btn>
              <Joined $ml={7}>
                {TRANSPORT.map((d, i) => <Btn key={i} $w={19.6} $kind="mid"><Transport d={d} /></Btn>)}
              </Joined>
              <Spacer $w={443} />
              <TimeField $w={73}>1</TimeField>
              <Spacer $w={7} />
              <Seg>
                <TimeField $w={18}><Clock /></TimeField>
                <TimeField $w={88} $between><span>Start</span><span>1</span></TimeField>
                <TimeField $w={84} $between><span>End</span><span>250</span></TimeField>
              </Seg>
            </TimeHead>
            <Ruler>{NUMS.map(n => <RulerNum key={n}>{n}</RulerNum>)}</Ruler>
            <Tracks />
            <Scrollbar />
            <PlayHead />
            <FrameChip>1</FrameChip>
            <EdgeArrow>›</EdgeArrow>
            <EdgeArrow $right>‹</EdgeArrow>
          </Timeline>
        </LeftCol>

        <RightCol>
          <Outliner>
            <PanelHead>
              <Btn $w={30}><OutlinerIc /><Chev /></Btn>
              <Btn $w={31} $ml={6}><LayerIcon /><Chev /></Btn>
              <SearchBox><SearchIc /></SearchBox>
              <Btn $w={31} $ml={59}><FilterIc /><Chev /></Btn>
              <Btn $w={20} $ml={6} $kind="mid"><NewColl /></Btn>
            </PanelHead>
            <Rows>
              <Row $pad={22}><CollectionIc /><RowText $ml={6}>Scene Collection</RowText></Row>
              <Row $pad={26}>
                <DownTri /><Check>✓</Check><IconBox $box><CollectionIc /></IconBox>
                <RowText $ml={4}>Collection</RowText><EyeWrap><Eye /></EyeWrap>
              </Row>
              <Row $pad={47}>
                <TreeArrow /><Spacer $w={11} /><CamIc c="#e08a3e" s={16} /><RowText $ml={5}>Camera</RowText>
                <SideIcon $box><CamData /></SideIcon><EyeWrap><Eye /></EyeWrap>
              </Row>
              <Row $pad={47}>
                <TreeArrow /><Spacer $w={12} /><OrangeTri /><RowText $ml={5}>Cube</RowText>
                <SideIcon><GreenTri /></SideIcon><EyeWrap><Eye /></EyeWrap>
              </Row>
              <Row $pad={47} $selected>
                <TreeArrow /><Spacer $w={10} /><IconBox $box><OrangeTri /></IconBox><RowText $ml={3}>Cube.001</RowText>
                <SideIcon><GreenTri c="#19c3a8" /></SideIcon><EyeWrap><Eye c="#e4e4e4" /></EyeWrap>
              </Row>
              <Row $pad={47}>
                <TreeArrow /><Spacer $w={12} /><Bulb /><RowText $ml={5}>Light</RowText>
                <SideIcon><LightData /></SideIcon><EyeWrap><Eye /></EyeWrap>
              </Row>
            </Rows>
            <TreeLine />
          </Outliner>

          <Properties>
            <PanelHead>
              <Btn $w={30}><PropsIc /><Chev /></Btn>
              <Spacer $w={15} />
              <ModeIcon />
              <HeadTitle>Cube.001</HeadTitle>
              <PinWrap><Pin /></PinWrap>
            </PanelHead>
            <PropBody>
              <PropNav>
                <NavTab $mt={0}><ToolIc /></NavTab>
                <NavTab $mt={9}><RenderIc /></NavTab>
                <NavTab><OutputIc /></NavTab>
                <NavTab><LayerIcon /></NavTab>
                <NavTab $mt={148}><ObjIc /></NavTab>
                <NavTab><ObjConstr /></NavTab>
                <NavTab><GreenTri s={15} c="#16c098" /></NavTab>
                <NavTab><MaterialIc /></NavTab>
                <NavTab $mt={10}><CheckerIc /></NavTab>
              </PropNav>
              <PropMain>
                <Dropdown>Add Modifier<Chev /></Dropdown>
              </PropMain>
            </PropBody>
          </Properties>
        </RightCol>
      </Workspace>

      <StatusBar>
        <StatusItem $w={78}><Mouse fill={0} /><span>Select</span></StatusItem>
        <Spacer $w={158} />
        <StatusItem $w={236}><Mouse fill={1} /><span>Center View to Mouse</span></StatusItem>
        <StatusItem $w={30}><Mouse fill={2} /></StatusItem>
        <StatusRight>Collection | Cube.001 | Вершин:16 | Граней:12 | Треуг.:24 | Объектов:1/4 | Пам.: 43.4 MiB | v2.82.7</StatusRight>
      </StatusBar>
      <BottomStrip><WhiteCorner /></BottomStrip>

      <Note $x={508} $y={23} $w={505} $h={60} $lh={42}>Решение частых проблем</Note>
      <Note $x={94} $y={167} $w={875} $h={115}>{"1. Создайте 2 куба и растяните их по высоте.\nНажмите S а потом Z и тяните мышкой."}</Note>
      <Note $x={1043} $y={515} $w={737} $h={158}>{"2. Нажмите N чтобы достать панель, если\nее еще нет, и посмотрите на Scale Z, там\nбудет отличное от 1 значение."}</Note>
      <Note $x={580} $y={850} $w={632} $h={106}>{"Это плохо, т.к. будут в дальнейшем\nискажения модификаторов"}</Note>
      <RedBox />
      <RedLines viewBox="0 0 1920 1050">
        <line x1="406" y1="282" x2="405" y2="360" stroke="#ed1c24" strokeWidth="4.500" />
        <line x1="1380" y1="379" x2="1243" y2="517" stroke="#ed1c24" strokeWidth="5" />
      </RedLines>
    </Page>
  );
}
